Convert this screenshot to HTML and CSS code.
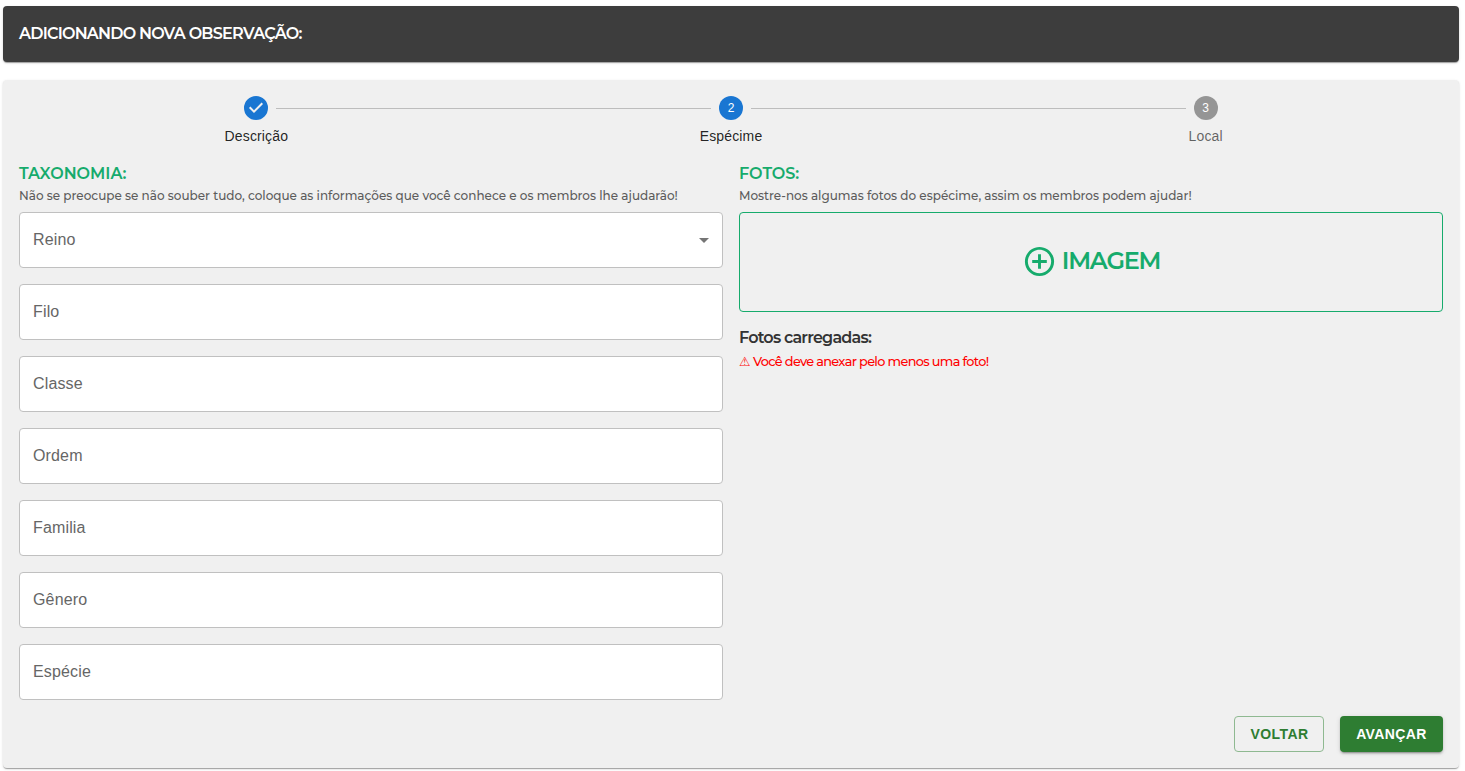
FILE: index.html
```html
<!DOCTYPE html>
<html lang="pt-BR">
<head>
<meta charset="utf-8">
<title>Nova observação</title>
<link rel="stylesheet" href="styles.css">
</head>
<body>
<header class="paper title-bar"><h1 class="title">ADICIONANDO NOVA OBSERVAÇÃO:</h1></header>
<main class="paper panel">
  <ol class="stepper">
    <li class="step">
      <svg class="step-icon" viewBox="0 0 24 24"><path fill="#1976d2" d="M12 0a12 12 0 1 0 0 24 12 12 0 0 0 0-24zm-2 17l-5-5 1.4-1.4 3.6 3.6 7.6-7.6L19 8l-9 9z"/></svg>
      <span class="step-label">Descrição</span>
    </li>
    <li class="step">
      <span class="step-icon step-number">2</span>
      <span class="step-label">Espécime</span>
    </li>
    <li class="step pending">
      <span class="step-icon step-number">3</span>
      <span class="step-label">Local</span>
    </li>
  </ol>
  <div class="columns">
    <section class="column">
      <h2 class="heading">TAXONOMIA:</h2>
      <p class="hint">Não se preocupe se não souber tudo, coloque as informações que você conhece e os membros lhe ajudarão!</p>
      <div class="fields">
        <div class="field">Reino<svg class="caret" viewBox="0 0 24 24"><path d="M7 10l5 5 5-5z"/></svg></div>
        <div class="field">Filo</div>
        <div class="field">Classe</div>
        <div class="field">Ordem</div>
        <div class="field">Familia</div>
        <div class="field">Gênero</div>
        <div class="field">Espécie</div>
      </div>
    </section>
    <section class="column">
      <h2 class="heading">FOTOS:</h2>
      <p class="hint">Mostre-nos algumas fotos do espécime, assim os membros podem ajudar!</p>
      <button class="upload" type="button">
        <svg class="plus" viewBox="0 0 24 24"><path d="M13 7h-2v4H7v2h4v4h2v-4h4v-2h-4V7zm-1-5C6.480 2 2 6.480 2 12s4.480 10 10 10 10-4.480 10-10S17.520 2 12 2zm0 18c-4.410 0-8-3.590-8-8s3.590-8 8-8 8 3.590 8 8-3.590 8-8 8z"/></svg>
        <span class="upload-text">IMAGEM</span>
      </button>
      <h3 class="loaded">Fotos carregadas:</h3>
      <p class="warning"><span class="sign">⚠</span><span>Você deve anexar pelo menos uma foto!</span></p>
    </section>
  </div>
  <div class="actions">
    <button class="button outlined" type="button">VOLTAR</button>
    <button class="button contained" type="button">AVANÇAR</button>
  </div>
</main>
</body>
</html>
```
FILE: styles.css
```css
* { box-sizing: border-box; }
body {
  margin: 0;
  padding: 6px 6px 0 3px;
  height: 771px;
  overflow: hidden;
  background: #fff;
  font-family: Montserrat, Inter, sans-serif;
}
h1, h2, h3, p, ol { margin: 0; padding: 0; }
.paper {
  border-radius: 4px;
  box-shadow: 0 2px 1px -1px rgba(0,0,0,.2), 0 1px 1px rgba(0,0,0,.14), 0 1px 3px rgba(0,0,0,.12);
}
.title-bar { height: 56px; padding: 16px; background: #3d3d3d; }
.title { font-size: 16px; line-height: 24px; font-weight: 600; color: #fff; letter-spacing: -.78px; white-space: nowrap; }
.panel { height: 688px; margin-top: 18px; padding: 16px; background: #f0f0f0; }
.stepper { display: flex; list-style: none; }
.step {
  flex: 1;
  position: relative;
  display: flex;
  flex-direction: column;
  align-items: center;
  gap: 6px;
  color: rgba(0,0,0,.87);
}
.step + .step::before {
  content: "";
  position: absolute;
  top: 12px;
  left: calc(-50% + 20px);
  right: calc(50% + 20px);
  height: 1px;
  background: #bdbdbd;
}
.step-icon { width: 24px; height: 24px; }
.step-number {
  border-radius: 50%;
  background: #1976d2;
  color: #fff;
  font: 12px/24px "Liberation Sans", sans-serif;
  text-align: center;
}
.step-label { font: 14px/20px "Liberation Sans", sans-serif; letter-spacing: .15px; }
.pending { color: rgba(0,0,0,.6); }
.pending .step-number { background: #959595; color: #fff; }
.columns { display: grid; grid-template-columns: 1fr 1fr; gap: 16px; margin-top: 16px; }
.heading { font-size: 16px; line-height: 24px; font-weight: 600; color: #16ab6c; white-space: nowrap; }
.hint { font-size: 12px; line-height: 20px; font-weight: 500; color: #5c5c5c; white-space: nowrap; }
.fields { display: grid; gap: 16px; margin-top: 6px; }
.field {
  display: flex;
  justify-content: space-between;
  height: 56px;
  padding: 15px 6px 15px 13px;
  border: 1px solid #c0c0c0;
  border-radius: 4px;
  background: #fff;
  color: #666;
  font: 16px/23px "Liberation Sans", sans-serif;
  letter-spacing: .15px;
}
.caret { width: 24px; height: 24px; fill: #757575; }
.upload {
  display: flex;
  align-items: center;
  justify-content: center;
  gap: 5px;
  width: 100%;
  height: 100px;
  margin-top: 6px;
  padding: 0 0 2px;
  border: 1px solid #16ab6c;
  border-radius: 4px;
  background: transparent;
  color: #16ab6c;
  font: 600 24px/32px Montserrat, Inter, sans-serif;
}
.plus { width: 35px; height: 35px; fill: currentColor; }
.upload-text { letter-spacing: -.05em; }
.loaded { margin-top: 14px; font-size: 16px; line-height: 24px; font-weight: 600; color: #333; letter-spacing: -.05em; }
.warning { display: flex; font-size: 12.800px; line-height: 20px; margin-top: 2px; font-weight: 500; color: #f00; letter-spacing: -.05em; white-space: nowrap; }
.sign { width: 14px; font: 12.800px/20px "DejaVu Sans", sans-serif; }
.actions { display: flex; justify-content: flex-end; gap: 16px; margin-top: 16px; }
.button {
  height: 36px;
  padding: 0;
  border-radius: 4px;
  font: bold 14px/24px "Liberation Sans", sans-serif;
  letter-spacing: .4px;
}
.outlined { width: 90px; padding-left: 1px; border: 1px solid #8fb991; background: transparent; color: #2e7d32; }
.contained {
  width: 103px;
  border: 0;
  background: #2e7d32;
  color: #fff;
  box-shadow: 0 3px 1px -2px rgba(0,0,0,.2), 0 2px 2px rgba(0,0,0,.14), 0 1px 5px rgba(0,0,0,.12);
}
```
